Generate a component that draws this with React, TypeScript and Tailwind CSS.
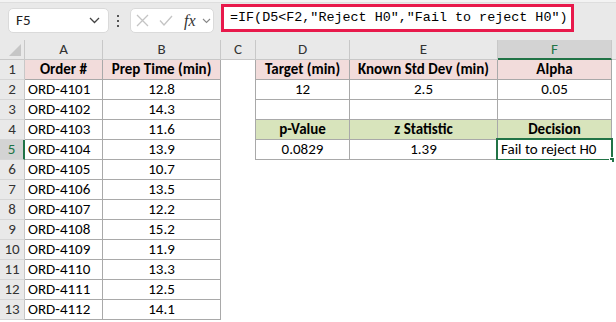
import React from "react";

type Cell = {
  t?: string;
  fill?: "pink" | "green";
  bold?: boolean;
  align?: "left" | "center";
  border?: boolean;
  sel?: boolean;
};

const dataA = [
  ["ORD-4101", "12.8"],
  ["ORD-4102", "14.3"],
  ["ORD-4103", "11.6"],
  ["ORD-4104", "13.9"],
  ["ORD-4105", "10.7"],
  ["ORD-4106", "13.5"],
  ["ORD-4107", "12.2"],
  ["ORD-4108", "15.2"],
  ["ORD-4109", "11.9"],
  ["ORD-4110", "13.3"],
  ["ORD-4111", "12.5"],
  ["ORD-4112", "14.1"],
];

function rightCells(r: number): Cell[] {
  if (r === 1)
    return [
      { t: "Target (min)", fill: "pink", bold: true, border: true },
      { t: "Known Std Dev (min)", fill: "pink", bold: true, border: true },
      { t: "Alpha", fill: "pink", bold: true, border: true },
    ];
  if (r === 2)
    return [
      { t: "12", border: true },
      { t: "2.5", border: true },
      { t: "0.05", border: true },
    ];
  if (r === 3) return [{ border: true }, { border: true }, { border: true }];
  if (r === 4)
    return [
      { t: "p-Value", fill: "green", bold: true, border: true },
      { t: "z Statistic", fill: "green", bold: true, border: true },
      { t: "Decision", fill: "green", bold: true, border: true },
    ];
  if (r === 5)
    return [
      { t: "0.0829", border: true },
      { t: "1.39", border: true },
      { t: "Fail to reject H0", border: true, align: "left", sel: true },
    ];
  return [{}, {}, {}];
}

function CellView({ c }: { c: Cell }) {
  const bg =
    c.fill === "pink" ? "bg-[#f2dcdb]" : c.fill === "green" ? "bg-[#d8e4bc]" : "bg-white";
  const b = c.border ? "border-r border-b border-[#a9a9a9]" : "";
  return (
    <div
      className={`relative h-[20px] flex items-center overflow-visible whitespace-nowrap text-[15px] leading-none text-black ${bg} ${b} ${
        c.align === "left" ? "justify-start pl-[3px]" : "justify-center"
      } ${c.bold ? "font-bold" : ""}`}
    >
      {c.t}
      {c.sel && (
        <div className="absolute left-[-2px] top-[-2px] right-[-2px] bottom-[-2px] border-2 border-[#217346] pointer-events-none">
          <div className="absolute right-[-4px] bottom-[-4px] w-[6px] h-[6px] bg-[#217346] border border-white" />
        </div>
      )}
    </div>
  );
}

export default function App() {
  const cols = ["A", "B", "C", "D", "E", "F"];
  return (
    <div
      className="w-[616px] h-[322px] overflow-hidden bg-white"
      style={{ fontFamily: "Carlito, Lato, 'Open Sans', sans-serif" }}
    >
      {/* Formula bar */}
      <div className="h-[40px] bg-[#e9e9e9] flex flex-col">
        <div className="h-[3px] bg-[#f3f3f3] border-b border-[#dedede]" />
        <div className="flex items-start">
          <div className="ml-[8px] mt-[5px] w-[101px] h-[25px] bg-white rounded-[5px] border border-[#dadada] flex items-center justify-between pl-[7px] pr-[8px]">
            <span className="text-[15px] text-[#222]">F5</span>
            <svg width="11" height="7" viewBox="0 0 11 7">
              <path d="M1 1l4.5 4.5L10 1" fill="none" stroke="#444" strokeWidth="1.3" />
            </svg>
          </div>
          <div className="ml-[8px] mt-[12px] flex flex-col gap-[3px]">
            <div className="w-[2px] h-[2px] bg-[#555]" />
            <div className="w-[2px] h-[2px] bg-[#555]" />
            <div className="w-[2px] h-[2px] bg-[#555]" />
          </div>
          <div className="ml-[11px] mt-[5px] w-[84px] h-[25px] bg-white rounded-[5px] border border-[#dadada] flex items-center pl-[5px]">
            <svg width="13" height="13" viewBox="0 0 13 13">
              <path d="M1 1l11 11M12 1L1 12" stroke="#c4c4c4" strokeWidth="1.3" />
            </svg>
            <svg className="ml-[10px]" width="14" height="11" viewBox="0 0 14 11">
              <path d="M1 5.5l4 4.5L13 1" fill="none" stroke="#c4c4c4" strokeWidth="1.3" />
            </svg>
            <span
              className="ml-[11px] text-[16px] italic text-[#333] leading-none"
              style={{ fontFamily: "'Liberation Serif', serif" }}
            >
              fx
            </span>
            <svg className="ml-[6px]" width="9" height="6" viewBox="0 0 9 6">
              <path d="M1 1l3.5 3.5L8 1" fill="none" stroke="#888" strokeWidth="1.1" />
            </svg>
          </div>
          <div className="ml-[7px] mt-[1px] w-[353px] h-[28px] bg-white border-[3px] border-[#e8194b] flex items-center pl-[6px]">
            <span
              className="text-[13.4px] text-black whitespace-nowrap"
              style={{ fontFamily: "'Liberation Mono', monospace" }}
            >
              =IF(D5&lt;F2,"Reject H0","Fail to reject H0")
            </span>
          </div>
        </div>
      </div>

      {/* Sheet */}
      <div className="grid grid-cols-[25px_78px_118px_35px_94px_148px_114px_1fr] auto-rows-[20px]">
        <div className="bg-[#e9e9e9] border-r border-b border-[#c8c8c8] relative">
          <svg className="absolute right-[3px] bottom-[3px]" width="12" height="12" viewBox="0 0 12 12">
            <polygon points="12,0 12,12 0,12" fill="#c6c6c6" />
          </svg>
        </div>
        {cols.map((c) =>
          c === "F" ? (
            <div
              key={c}
              className="bg-[#d3d3d3] border-r border-[#c8c8c8] border-b-2 border-b-[#217346] flex items-center justify-center text-[15px] text-[#217346]"
            >
              {c}
            </div>
          ) : (
            <div
              key={c}
              className="bg-[#e9e9e9] border-r border-b border-[#c8c8c8] flex items-center justify-center text-[15px] text-[#333]"
            >
              {c}
            </div>
          )
        )}
        <div className="bg-[#e9e9e9] border-b border-[#c8c8c8]" />

        {Array.from({ length: 13 }, (_, i) => i + 1).map((r) => {
          const isSel = r === 5;
          const right = rightCells(r);
          const a = r === 1 ? null : dataA[r - 2];
          return (
            <React.Fragment key={r}>
              <div
                className={`flex items-center justify-center text-[15px] border-b border-[#d6d6d6] ${
                  isSel
                    ? "bg-[#d3d3d3] text-[#217346] border-r-2 border-r-[#217346]"
                    : "bg-[#e9e9e9] text-[#333] border-r border-r-[#c8c8c8]"
                }`}
              >
                {r}
              </div>
              {r === 1 ? (
                <>
                  <CellView c={{ t: "Order #", fill: "pink", bold: true, border: true }} />
                  <CellView c={{ t: "Prep Time (min)", fill: "pink", bold: true, border: true }} />
                </>
              ) : (
                <>
                  <CellView c={{ t: a![0], border: true, align: "left" }} />
                  <CellView c={{ t: a![1], border: true }} />
                </>
              )}
              <div className={`bg-white ${r <= 5 ? "border-r border-[#a9a9a9]" : ""}`} />
              {right.map((c, k) => (
                <CellView key={k} c={c} />
              ))}
              <div className="bg-white" />
            </React.Fragment>
          );
        })}
      </div>
    </div>
  );
}
